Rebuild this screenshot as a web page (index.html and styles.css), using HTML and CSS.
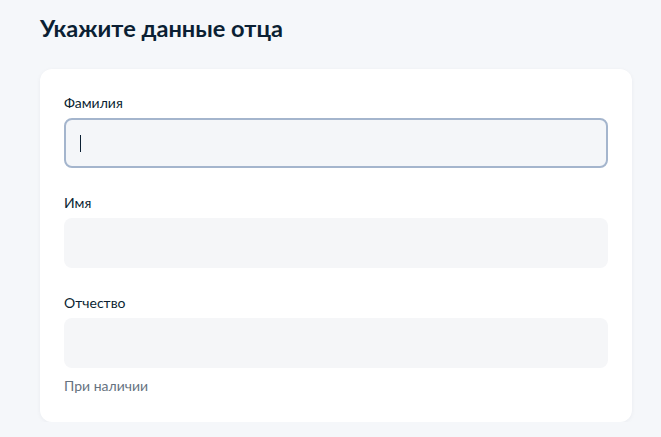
FILE: index.html
```html
<!DOCTYPE html>
<html lang="ru">
<head>
<meta charset="utf-8">
<link rel="stylesheet" href="styles.css">
</head>
<body>
<div class="page">
  <h1 class="title">Укажите данные отца</h1>
  <div class="card">
    <div class="field">
      <label class="label">Фамилия</label>
      <div class="input focused"><span class="caret"></span></div>
    </div>
    <div class="field">
      <label class="label">Имя</label>
      <div class="input"></div>
    </div>
    <div class="field last">
      <label class="label">Отчество</label>
      <div class="input"></div>
      <div class="hint">При наличии</div>
    </div>
  </div>
</div>
</body>
</html>
```
FILE: styles.css
```css
html, body {
  margin: 0;
  padding: 0;
  background: #f5f7fa;
  font-family: Lato, "Noto Sans", sans-serif;
  color: #0b1f33;
}
.page {
  padding: 12px 29px 0 40px;
}
.title {
  margin: 0 0 25px;
  font-size: 23.6px;
  line-height: 32px;
  font-weight: 700;
  color: #0b1f33;
}
.card {
  background: #fff;
  border-radius: 12px;
  padding: 24px 24px 26px;
  box-shadow: 0 1px 4px rgba(11, 31, 51, 0.05);
}
.field {
  display: flex;
  flex-direction: column;
  margin-bottom: 25px;
}
.field.last {
  margin-bottom: 0;
}
.label {
  font-size: 14px;
  line-height: 20px;
  color: #0b1f33;
  margin-bottom: 5px;
}
.input {
  height: 50px;
  box-sizing: border-box;
  background: #f5f6f8;
  border-radius: 8px;
  display: flex;
  align-items: center;
  padding-left: 16px;
}
.input.focused {
  border: 2px solid #a4b5cd;
  background: #f4f6f9;
  padding-left: 14px;
}
.caret {
  width: 1px;
  height: 17px;
  background: #0b1f33;
}
.hint {
  margin-top: 8px;
  font-size: 14px;
  line-height: 20px;
  color: #66727f;
}
```
